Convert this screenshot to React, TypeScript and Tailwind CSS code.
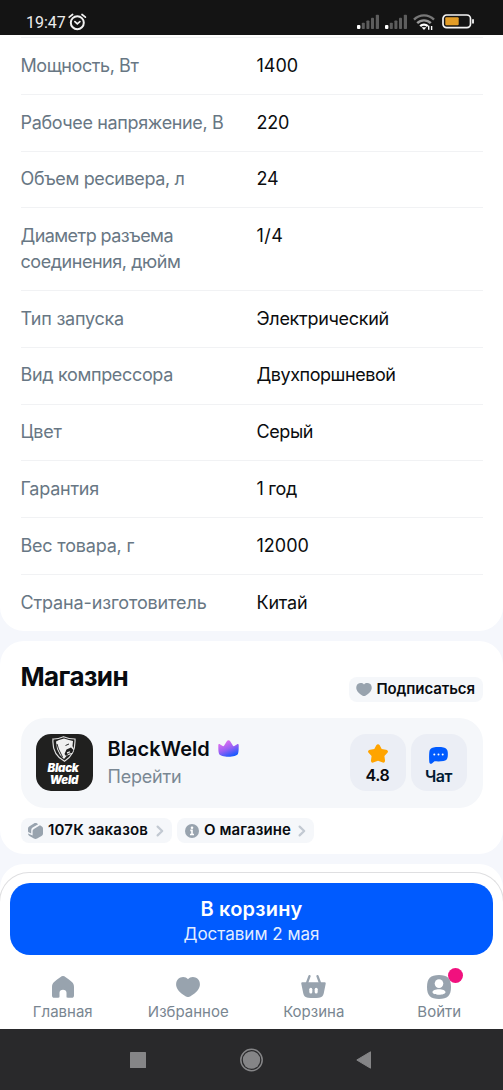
import { ReactNode } from 'react'

interface Spec {
  label: ReactNode
  value: string
  labelClass?: string
  valueClass?: string
}

const specs: Spec[] = [
  { label: 'Мощность, Вт', value: '1400', labelClass: 'tracking-[-0.42px]' },
  { label: 'Рабочее напряжение, В', value: '220', labelClass: 'tracking-[-0.36px]', valueClass: 'tracking-[-0.2px]' },
  { label: 'Объем ресивера, л', value: '24', labelClass: 'tracking-[-0.38px]', valueClass: 'tracking-[-0.3px]' },
  {
    label: (
      <>
        <span className="tracking-[-0.56px]">Диаметр разъема</span>
        <br />
        соединения, дюйм
      </>
    ),
    value: '1/4',
    labelClass: 'tracking-[-0.46px]',
    valueClass: 'tracking-[0.5px]',
  },
  { label: 'Тип запуска', value: 'Электрический', labelClass: 'tracking-[-0.25px]', valueClass: 'tracking-[-0.3px]' },
  { label: 'Вид компрессора', value: 'Двухпоршневой', labelClass: 'tracking-[-0.34px]', valueClass: 'tracking-[-0.45px]' },
  { label: 'Цвет', value: 'Серый', labelClass: 'tracking-[-0.25px]', valueClass: 'tracking-[-0.4px]' },
  { label: 'Гарантия', value: '1 год', labelClass: 'tracking-[-0.25px]', valueClass: 'tracking-[-0.3px]' },
  { label: 'Вес товара, г', value: '12000', labelClass: 'tracking-[-0.2px]' },
  { label: 'Страна-изготовитель', value: 'Китай', labelClass: 'tracking-[-0.14px]', valueClass: 'tracking-[-0.2px]' },
]

function SignalIcon() {
  return (
    <svg width="23" height="16" viewBox="0 0 23 16" fill="#5d5d5d">
      <rect x="0" y="11" width="3.4" height="4" rx="1" fill="#fff" />
      <rect x="4.8" y="8.8" width="3" height="6.2" rx="0.8" />
      <rect x="9.4" y="6.4" width="3" height="8.6" rx="0.8" />
      <rect x="14" y="3.8" width="3" height="11.2" rx="0.8" />
      <rect x="18.8" y="0.8" width="3.2" height="14.2" rx="0.8" />
    </svg>
  )
}

function AlarmIcon() {
  return (
    <svg width="19" height="18" viewBox="0 0 19 18" fill="none" stroke="#f2f2f2" strokeLinecap="round">
      <circle cx="9.3" cy="9.7" r="6.5" strokeWidth="2" />
      <path d="M1.2 4.2 4.6 1.5M17.4 4.2 14 1.5" strokeWidth="1.7" />
      <path d="m6.9 8.6 2.4 2.2 2.6-2.2" strokeWidth="1.7" />
    </svg>
  )
}

function WifiIcon() {
  return (
    <svg width="22" height="17" viewBox="0 0 22 17" fill="none">
      <path d="M1 5.6C6.5 0 15.5 0 21 5.6" stroke="#777" strokeWidth="2.4" />
      <path d="M4.2 9.2c3.8-3.8 9.8-3.8 13.6 0" stroke="#999" strokeWidth="2.4" />
      <path d="M7.2 12.2c2.2-2 5.4-2 7.6 0" stroke="#fff" strokeWidth="2.4" />
      <path d="M8.6 13.3h4.8L11 16z" fill="#fff" />
      <path d="M15.7 15.8v-4M18.6 12v4" stroke="#fff" strokeWidth="1.4" />
    </svg>
  )
}

function BatteryIcon() {
  return (
    <svg width="33" height="15" viewBox="0 0 33 15" fill="none">
      <rect x="1" y="1" width="27.5" height="12.6" rx="3.6" stroke="#f4f4f4" strokeWidth="1.7" />
      <rect x="3.3" y="3.3" width="13.4" height="8" rx="1" fill="#e39d27" />
      <path d="M31 5.2v4.4" stroke="#f4f4f4" strokeWidth="1.8" />
    </svg>
  )
}

function HeartIcon({ className }: { className?: string }) {
  return (
    <svg className={className} viewBox="0 0 24 20" fill="currentColor">
      <path d="M12 2.2C9.5-.8 5-.5 2.4 1.7.2 3.7-.3 7 .4 9.6c1 4.2 5.7 7.9 9.5 9.9 1.4.7 2.8.7 4.2 0 3.8-2 8.5-5.7 9.5-9.9.7-2.6.2-5.900-2-7.900C19-.5 14.500-.8 12 2.200Z" />
    </svg>
  )
}

function ChevronIcon() {
  return (
    <svg width="8" height="12" viewBox="0 0 8 12" fill="none" stroke="#c2c9d2" strokeWidth="2.2" strokeLinecap="round" strokeLinejoin="round">
      <path d="M1.6 1.6 6.2 6l-4.6 4.4" />
    </svg>
  )
}

function BoxIcon() {
  return (
    <svg width="15" height="16" viewBox="0 0 15 16" className="shrink-0" fill="#98a3ae">
      <path d="M5.9.5c1-.6 2.200-.6 3.200 0l1.100.7-5.100 3C3.900 4.900 3.200 6 3.200 7.400v3.200L.5 9.300c-.4-.3-.5-.7-.5-1.200V5.900c0-1.100.6-2 1.500-2.600z" />
      <path d="m12 2.300 1.500 1c1 .6 1.500 1.500 1.500 2.600v4.500c0 1.100-.6 2-1.500 2.600l-4.400 2.500c-1 .6-2.200.6-3.200 0L1.500 13C.6 12.400.1 11.600 0 10.500l4.600 2V8.200c0-1.100.5-1.800 1.300-2.300z" />
    </svg>
  )
}

function InfoIcon() {
  return (
    <svg width="14" height="14" viewBox="0 0 14 14" className="shrink-0">
      <circle cx="7" cy="7" r="7" fill="#98a3ae" />
      <circle cx="7" cy="3.7" r="1.3" fill="#fff" />
      <path d="M5.3 6.4H7v4M5 10.5h4" stroke="#fff" strokeWidth="1.6" fill="none" />
    </svg>
  )
}

function CrownIcon() {
  return (
    <svg width="21" height="17" viewBox="0 0 21 17">
      <defs>
        <linearGradient id="crown" x1="6" y1="1" x2="13" y2="17" gradientUnits="userSpaceOnUse">
          <stop offset="0.1" stopColor="#d66df0" />
          <stop offset="0.5" stopColor="#9860f4" />
          <stop offset="1" stopColor="#1459ff" />
        </linearGradient>
      </defs>
      <path
        d="M.3 5.200c0-1.300 1.100-1.500 1.900-.8l2.500 1.700c.5.300 1 .2 1.300-.3l2.800-4.500c.8-1.300 2.600-1.300 3.400 0L15 5.800c.3.500.8.600 1.300.3l2.500-1.700c.8-.7 1.900-.5 1.900.8 0 3.100 0 6.500-.7 8.600-.8 2-4.900 3-9.500 3s-8.700-1-9.500-3C.3 11.700.3 8.300.3 5.200Z"
        fill="url(#crown)"
      />
    </svg>
  )
}

function ShopLogo() {
  return (
    <div className="flex h-[57px] w-[57px] shrink-0 flex-col items-center rounded-[15px] bg-[#20201f] pt-[2px] text-white">
      <svg width="24" height="26" viewBox="0 0 24 26" fill="none">
        <path d="M1 3c4 .2 7-.8 10.500-2.300C15 2.200 18.500 3 23 3c.5 9.500-1.500 17-10.500 22.300C3.500 20.500.2 13 1 3Z" stroke="#dedede" strokeWidth="1.2" />
        <path d="M4 5.500 7 4l5-1.500 5 1.500 4 1-.5 5 1.500 4-2 4-5 1.500L12 23l-4-4-3-6z" fill="#f0f0f0" />
        <path d="m14.500 13.500 4.500-2 2.500 2.500-1.500 3-3 .5-3 2.500-1.500-2z" fill="#1f1f1f" />
        <path d="m14.800 16.300 3-1 .5 1-3 1.500z" fill="#f0f0f0" />
        <path d="m5 8 1.500 5 4 8M13.500 9.500l3.500-1.500" stroke="#2a2a2a" strokeWidth="1" />
      </svg>
      <div className="text-center text-[11.5px] leading-[12px] font-black tracking-[-0.3px] italic">
        <span className="mr-[2px]">Black</span>
        <br />
        Weld
      </div>
    </div>
  )
}

function StarIcon() {
  return (
    <svg width="20" height="19" viewBox="0 0 20 19" fill="#ffa400">
      <path d="M8.300 1.300c.8-1.500 2.600-1.500 3.400 0l2 3.800 4.300.6c2 .3 2.600 2 1.200 3.400l-2.800 2.900.6 4.300c.2 1.900-1.200 2.900-2.900 2L10 16.700l-4.100 1.600c-1.700.9-3.100-.1-2.900-2l.6-4.300L.8 9.100C-.6 7.700 0 6 2 5.700l4.300-.6z" />
    </svg>
  )
}

function ChatIcon() {
  return (
    <svg width="19" height="17" viewBox="0 0 19 17">
      <path d="M4.5.4C7.5-.1 11.500-.1 14.500.4c2.500.4 4 2 4.200 4.400.2 1.800.2 3.200 0 5-.2 2.300-1.700 4-4.200 4.300-2.700.4-6 .4-9 .2l-2.600 2.200C1.600 17.300.4 16.600.3 15 0 11.700 0 8.300.3 4.900.5 2.400 2 .8 4.500.4Z" fill="#005bff" />
      <circle cx="5.3" cy="7.6" r="1" fill="#fff" />
      <circle cx="9.5" cy="7.6" r="1" fill="#fff" />
      <circle cx="13.7" cy="7.6" r="1" fill="#fff" />
    </svg>
  )
}

function HomeIcon() {
  return (
    <svg width="22" height="22" viewBox="0 0 22 22" fill="currentColor">
      <path d="M8.3 1.2c1.8-1.500 3.600-1.500 5.400 0 2.200 1.500 4.300 3 6.200 4.900C21.400 7.500 22 9 22 11v8.500c0 1.500-.9 2.300-2.300 2.300h-4c-.8 0-1.200-.4-1.200-1.200v-3.800c0-1.900-1.400-3.100-3.500-3.100s-3.500 1.200-3.500 3.100v3.800c0 .8-.4 1.200-1.200 1.200h-4C.9 21.800 0 21 0 19.500V11c0-2 .6-3.500 2.100-4.900 1.900-1.900 4-3.400 6.200-4.900Z" />
    </svg>
  )
}

function BasketIcon() {
  return (
    <svg width="25" height="23" viewBox="0 0 25 23">
      <path d="M5.800 8.500 8.500 1.200M19.200 8.500l-2.700-7.300" stroke="currentColor" strokeWidth="2.3" strokeLinecap="round" />
      <path d="M1.500 7.200h22c1 0 1.400.6 1.200 1.600l-2 9.800c-.6 2.700-2 4-4.700 4.100-3.600.3-7.400.3-11 0-2.700-.1-4.100-1.400-4.700-4.100L.3 8.800c-.2-1 .2-1.600 1.200-1.600Z" fill="currentColor" />
      <rect x="8.3" y="12.7" width="3" height="5.8" rx="1.5" fill="#fff" />
      <rect x="13.7" y="12.7" width="3" height="5.8" rx="1.5" fill="#fff" />
    </svg>
  )
}

function ProfileIcon() {
  return (
    <svg width="24" height="24" viewBox="0 0 24 24">
      <path d="M12 0c8.500 0 12 3.500 12 12s-3.500 12-12 12S0 20.500 0 12 3.500 0 12 0Z" fill="currentColor" />
      <circle cx="12" cy="8.6" r="4.3" fill="#fff" />
      <path d="M12 14.3c3.600 0 6.500 1.200 6.500 3 0 1.600-3.200 2.500-6.500 2.500s-6.500-.9-6.500-2.500c0-1.800 2.900-3 6.500-3Z" fill="#fff" />
    </svg>
  )
}

function StatusBar() {
  return (
    <header className="flex h-[35px] items-start bg-[#141414] pt-[13px] pl-[26px]">
      <span className="w-[42px] font-[Roboto] text-[16px] leading-[19px] text-[#ececec]">19:47</span>
      <AlarmIcon />
      <div className="ml-auto flex items-start pt-[1px] pr-[28px]">
        <SignalIcon />
        <div className="ml-[5px]">
          <SignalIcon />
        </div>
        <div className="ml-[5px]">
          <WifiIcon />
        </div>
        <div className="ml-[7px]">
          <BatteryIcon />
        </div>
      </div>
    </header>
  )
}

function SpecTable() {
  return (
    <section className="rounded-b-[24px] bg-white px-[20.5px] pt-[2px]">
      {specs.map((spec, i) => (
        <div key={i} className="flex border-t border-[#f1f2f4] pt-[14.75px] pb-[15.49px] text-[18px] leading-[25.6px]">
          <div className="w-[236px] shrink-0 whitespace-nowrap text-[#687784]">
            <span className={spec.labelClass}>{spec.label}</span>
          </div>
          <div className="whitespace-nowrap text-[#0b0d0f]">
            <span className={spec.valueClass}>{spec.value}</span>
          </div>
        </div>
      ))}
    </section>
  )
}

function Shop() {
  return (
    <section className="mt-[10px] h-[213px] rounded-[24px] bg-white px-[20.5px]">
      <div className="flex h-[77px] justify-between">
        <h2 className="pt-[20px] text-[26px] leading-[32px] font-bold tracking-[-0.6px] text-[#080b10]">Магазин</h2>
        <button className="mt-[36px] flex h-[25px] w-[134px] items-center rounded-[8px] bg-[#f5f7fa] pl-[7px] text-[15px] font-semibold tracking-[-0.1px] whitespace-nowrap text-[#080b10]">
          <HeartIcon className="mt-[1px] mr-[5px] h-[13px] w-[16px] shrink-0 text-[#98a3ae]" />
          <span>Подписаться</span>
        </button>
      </div>
      <div className="flex h-[90px] items-center rounded-[24px] bg-[#f5f7fa] pr-[16px] pl-[15px]">
        <ShopLogo />
        <div className="ml-[15px]">
          <div className="flex items-center text-[20px] leading-[28px] font-semibold text-[#080b10]">
            <span className="w-[110px] tracking-[0.05px]">BlackWeld</span>
            <CrownIcon />
          </div>
          <div className="text-[18px] leading-[28px] tracking-[-0.2px] text-[#7a8894]">Перейти</div>
        </div>
        <div className="ml-auto flex gap-[5px] text-[16px] leading-[20px] font-semibold">
          <div className="flex h-[57px] w-[56px] flex-col items-center rounded-[16px] bg-[#ebeef5] pt-[10px] text-[#080b10]">
            <StarIcon />
            <span className="mt-[2px] tracking-[-0.3px]">4.8</span>
          </div>
          <div className="flex h-[57px] w-[56px] flex-col items-center rounded-[16px] bg-[#ebeef5] pt-[12.5px] text-[#001a34]">
            <ChatIcon />
            <span className="mt-[2.5px] tracking-[-0.5px]">Чат</span>
          </div>
        </div>
      </div>
      <div className="mt-[10px] flex gap-[5px] text-[15px] font-semibold text-[#080b10]">
        <div className="flex h-[25.5px] w-[151px] items-center rounded-[8px] bg-[#f5f7fa] pr-[8px] pl-[7.5px] whitespace-nowrap">
          <BoxIcon />
          <span className="mr-auto ml-[5px] tracking-[0.2px]">107К заказов</span>
          <ChevronIcon />
        </div>
        <div className="flex h-[25.5px] w-[137.5px] items-center rounded-[8px] bg-[#f5f7fa] pr-[8px] pl-[8px] whitespace-nowrap">
          <InfoIcon />
          <span className="mr-auto ml-[5.5px] tracking-[0.1px]">О магазине</span>
          <ChevronIcon />
        </div>
      </div>
    </section>
  )
}

function TabItem({ icon, label }: { icon: ReactNode; label: ReactNode }) {
  return (
    <div className="flex flex-1 flex-col items-center text-[#98a3ae]">
      <div className="flex h-[26px] items-center">{icon}</div>
      <span className="mt-[2px] text-[15px] leading-[20px] text-[#798691]">{label}</span>
    </div>
  )
}

function BottomSheet() {
  return (
    <div className="mt-[10px] rounded-t-[24px] bg-white pt-[8px]">
      <div className="-mx-px h-[157.5px] rounded-t-[30px] border border-b-0 border-[#dfdfe1] bg-white px-[10px] pt-[10px]">
        <button className="flex h-[72px] w-full flex-col items-center rounded-[20px] bg-[#005bff] pt-[12px] text-white">
          <span className="text-[20px] leading-[28px] font-semibold tracking-[0.2px]">В корзину</span>
          <span className="-mt-px text-[17px] leading-[24px] text-[#e3edff]">Доставим 2 мая</span>
        </button>
        <nav className="-mx-[10px] flex pt-[19px] pr-[1px]">
          <TabItem icon={<HomeIcon />} label="Главная" />
          <TabItem icon={<HeartIcon className="h-[20px] w-[24px]" />} label="Избранное" />
          <TabItem icon={<BasketIcon />} label="Корзина" />
          <TabItem
            icon={
              <div className="relative">
                <ProfileIcon />
                <span className="absolute -top-[7px] left-[20.5px] h-[15.5px] w-[15.5px] rounded-full bg-[#f1117e]" />
              </div>
            }
            label="Войти"
          />
        </nav>
      </div>
    </div>
  )
}

function SystemNav() {
  return (
    <footer className="flex h-[61px] items-center gap-[93px] bg-[#29292b] pl-[130px]">
      <svg width="16" height="16" viewBox="0 0 16 16">
        <rect width="16" height="16" rx="0.5" fill="#858587" />
      </svg>
      <svg width="25" height="24" viewBox="0 0 25 24">
        <circle cx="12.5" cy="12" r="10.7" fill="none" stroke="#858587" strokeWidth="1.5" />
        <circle cx="12.5" cy="12" r="8.7" fill="#858587" />
      </svg>
      <svg width="16" height="18" viewBox="0 0 16 18" className="-ml-[1px]">
        <path d="M14.5.8v16.4L.8 9z" fill="#858587" stroke="#858587" strokeLinejoin="round" />
      </svg>
    </footer>
  )
}

export default function App() {
  return (
    <div className="h-[1090px] w-[503px] overflow-hidden bg-[#f5f7fc] font-[Inter,'Noto_Sans',sans-serif]">
      <StatusBar />
      <SpecTable />
      <Shop />
      <BottomSheet />
      <SystemNav />
    </div>
  )
}
